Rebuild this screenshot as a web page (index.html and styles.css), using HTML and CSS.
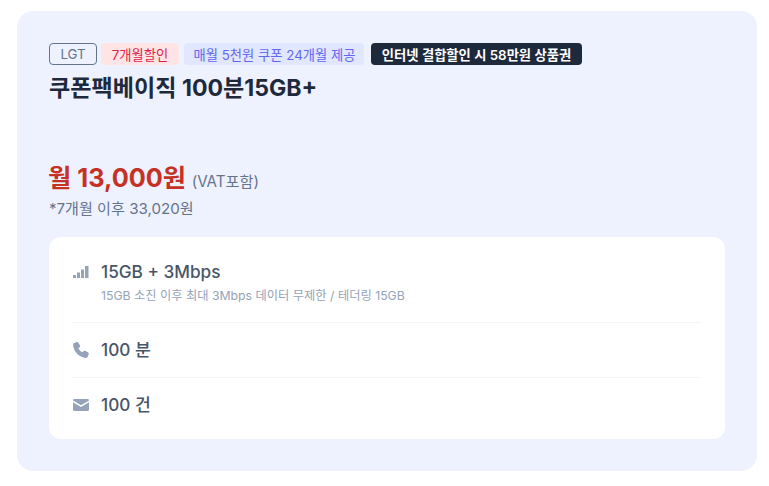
FILE: index.html
```html
<!DOCTYPE html>
<html lang="ko">
<head>
<meta charset="utf-8">
<title>쿠폰팩베이직 100분15GB+</title>
<link rel="stylesheet" href="styles.css">
</head>
<body>
<main class="plan">
  <div class="tags">
    <span class="tag tag-carrier">LGT</span>
    <span class="tag tag-red">7개월할인</span>
    <span class="tag tag-indigo">매월 5천원 쿠폰 24개월 제공</span>
    <span class="tag tag-dark">인터넷 결합할인 시 58만원 상품권</span>
  </div>
  <h1 class="title">쿠폰팩베이직 100분15GB+</h1>
  <div class="price-row"><strong class="price">월 13,000원</strong> <span class="vat">(VAT포함)</span></div>
  <p class="after">*7개월 이후 33,020원</p>
  <section class="specs">
    <div class="spec spec-data">
      <svg class="icon" viewBox="0 0 16 16" aria-hidden="true"><path d="M0 11h3v3H0zM4 8.500h3V14H4zM8 5.500h3V14H8zM12 2h3.500v12H12z"/></svg>
      <div>
        <div class="spec-main">15GB + 3Mbps</div>
        <div class="spec-sub">15GB 소진 이후 최대 3Mbps 데이터 무제한 / 테더링 15GB</div>
      </div>
    </div>
    <div class="spec spec-voice">
      <svg class="icon" viewBox="0 0 16 16" aria-hidden="true"><path d="M3.800.1 1.200 1C.4 1.300 0 2 .1 2.900c.6 6.500 5.800 12.300 12.700 13 .8.100 1.600-.3 1.900-1.100l1-2.600c.2-.6 0-1.300-.6-1.700l-2.800-1.700c-.6-.3-1.300-.2-1.700.3l-1 1.200C7.300 9.500 6 8 5.400 6.300l1.200-1c.5-.4.7-1.100.4-1.700L5.500 1C5.200.2 4.500-.1 3.800.1z"/></svg>
      <div class="spec-main">100 분</div>
    </div>
    <div class="spec spec-sms">
      <svg class="icon" viewBox="0 0 16 16" aria-hidden="true"><path d="M1.500 2h13c.8 0 1.500.6 1.500 1.400L8 8.300 0 3.400C0 2.600.7 2 1.500 2zM0 5.200v7.300c0 .9.700 1.500 1.500 1.500h13c.8 0 1.500-.6 1.500-1.500V5.200L8 10z"/></svg>
      <div class="spec-main">100 건</div>
    </div>
  </section>
</main>
</body>
</html>
```

FILE: styles.css
```css
* { box-sizing: border-box; }
html, body { margin: 0; background: #fff; }
body {
  padding: 11px 12px 15px 17px;
  font-family: Inter, "Noto Sans CJK KR", sans-serif;
  color: #1e293b;
}
.plan {
  height: 460px;
  padding: 32px;
  background: #eef2ff;
  border-radius: 16px;
}
.tags { display: flex; height: 22px; }
.tag {
  display: flex;
  align-items: center;
  justify-content: center;
  height: 22px;
  font-size: 13.3px;
  border-radius: 4px;
  white-space: nowrap;
}
.tag-carrier { width: 48px; border: 1px solid #64748b; color: #64748b; margin-right: 4px; }
.tag-red { width: 78px; background: #ffe4e6; color: #e11d48; margin-right: 5px; }
.tag-indigo { width: 180px; padding-left: 1px; background: #e0e7ff; color: #6366f1; margin-right: 7px; }
.tag-dark { width: 211px; background: #1e293b; color: #fff; font-weight: 600; }
.title {
  margin: 7px 0 0;
  font-size: 23.1px;
  line-height: 32px;
  font-weight: 700;
}
.price-row { margin-top: 56px; height: 36px; line-height: 36px; margin-left: -1px; }
.price { font-size: 25.3px; font-weight: 700; color: #c53225; }
.vat { font-size: 15.2px; color: #64748b; margin-left: 1px; }
.after { margin: 3px 0 0; font-size: 15.1px; line-height: 20px; color: #64748b; }
.specs {
  margin-top: 18px;
  padding: 0 24px;
  height: 202px;
  background: #fff;
  border-radius: 12px;
}
.spec { display: flex; align-items: center; gap: 12px; }
.spec-data { height: 85px; align-items: flex-start; padding-top: 23px; }
.spec-data .icon { margin-top: 4px; }
.spec-voice, .spec-sms { height: 55px; border-top: 1px solid #f1f5f9; }
.icon { flex: none; width: 16px; height: 16px; fill: #94a3b8; }
.spec-main { font-size: 17.2px; font-weight: 500; line-height: 24px; color: #475569; }
.spec-sub { font-size: 12.25px; line-height: 16px; color: #94a3b8; margin-top: 4px; }
```
